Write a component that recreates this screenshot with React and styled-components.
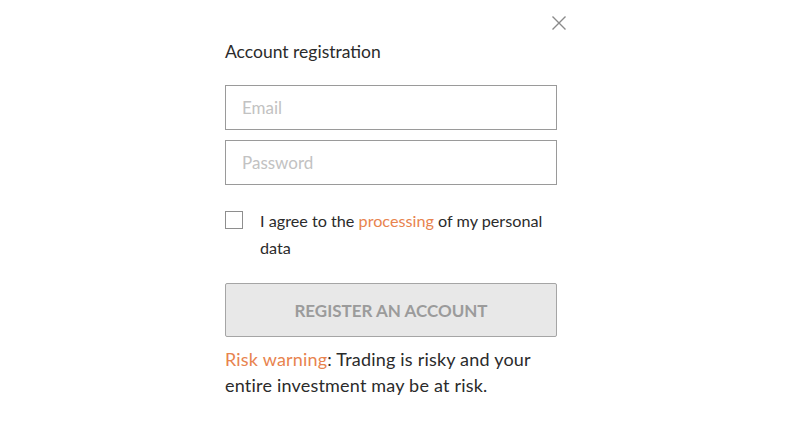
import React from 'react'
import styled, { createGlobalStyle } from 'styled-components'

const GlobalStyle = createGlobalStyle`
  html, body {
    margin: 0;
    padding: 0;
    background: #ffffff;
  }
  body {
    font-family: Lato, "Noto Sans", sans-serif;
    color: #2b2b2b;
  }
`

const Page = styled.div`
  width: 800px;
  height: 427px;
  box-sizing: border-box;
  padding-right: 18px;
  display: flex;
  justify-content: center;
  background: #ffffff;
`

const Modal = styled.div`
  position: relative;
  width: 332px;
  padding: 40px 33px 0;
  display: flex;
  flex-direction: column;
`

const CloseButton = styled.button`
  position: absolute;
  top: 15px;
  right: 23px;
  width: 16px;
  height: 16px;
  padding: 0;
  border: none;
  background: none;
  cursor: pointer;
  display: flex;
`

const Title = styled.h2`
  margin: 0 0 21px;
  font-size: 17.5px;
  line-height: 24px;
  font-weight: 400;
  color: #2b2b2b;
`

const Field = styled.input`
  box-sizing: border-box;
  width: 100%;
  height: 45px;
  margin-bottom: ${props => props.$gap}px;
  padding: 0 16px;
  border: 1px solid #9a9a9a;
  background: #fff;
  font-family: inherit;
  font-size: 17px;
  color: #333;
  outline: none;

  &::placeholder {
    color: #c2c2c2;
  }
`

const AgreeRow = styled.label`
  display: flex;
  align-items: flex-start;
  gap: 17px;
  margin: 22px 0 22px;
`

const Box = styled.span`
  flex: none;
  box-sizing: border-box;
  width: 18px;
  height: 18px;
  margin-top: 4px;
  border: 1px solid #8e8e8e;
  background: #fff;
`

const AgreeText = styled.span`
  font-size: 16.2px;
  line-height: 27px;
  color: #2b2b2b;
`

const Accent = styled.a`
  color: #e8834e;
  text-decoration: none;
`

const Submit = styled.button`
  box-sizing: border-box;
  width: 100%;
  height: 54px;
  border: 1px solid #a5a5a5;
  border-radius: 2px;
  background: #e8e8e8;
  font-family: inherit;
  font-size: 17px;
  font-weight: 700;
  color: #9b9b9b;
  text-transform: uppercase;
`

const Warning = styled.p`
  margin: 9px 0 0;
  font-size: 18px;
  line-height: 26px;
  letter-spacing: 0.2px;
  color: #2b2b2b;
`

export default function App() {
  return (
    <>
      <GlobalStyle />
      <Page>
        <Modal>
          <CloseButton aria-label="Close">
            <svg width="16" height="16" viewBox="0 0 16 16">
              <path d="M1.5 1.5 L14.5 14.5 M14.5 1.5 L1.5 14.5" stroke="#8a8a8a" strokeWidth="1.4" fill="none" />
            </svg>
          </CloseButton>
          <Title>Account registration</Title>
          <Field type="email" placeholder="Email" $gap={10} />
          <Field type="password" placeholder="Password" $gap={0} />
          <AgreeRow>
            <Box />
            <AgreeText>
              I agree to the <Accent href="#">processing</Accent> of my personal data
            </AgreeText>
          </AgreeRow>
          <Submit type="button">Register an account</Submit>
          <Warning>
            <Accent href="#">Risk warning</Accent>: Trading is risky and your entire investment may be at risk.
          </Warning>
        </Modal>
      </Page>
    </>
  )
}
